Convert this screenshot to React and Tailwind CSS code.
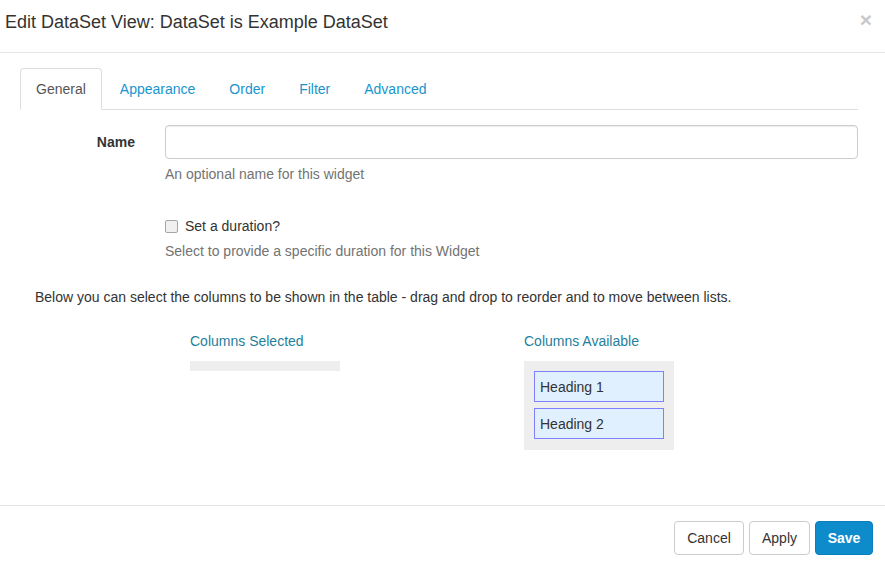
import React from 'react';

const tabs = ['General', 'Appearance', 'Order', 'Filter', 'Advanced'];

const App = () => {
    return (
        <div className="w-[885px] h-[566px] bg-white flex flex-col overflow-hidden text-[14px] text-[#333] font-['Liberation_Sans',Arial,sans-serif]">
            {/* Header */}
            <div className="h-[53px] shrink-0 border-b border-[#e5e5e5] flex items-start justify-between pl-[5px] pr-[13px] pt-[12px]">
                <h4 className="text-[18px] leading-[20px] text-[#333]">Edit DataSet View: DataSet is Example DataSet</h4>
                <button className="text-[21px] leading-[16px] font-bold text-[#c8c8c8]">×</button>
            </div>

            {/* Body */}
            <div className="flex-1 pt-[15px] px-[20px]">
                <ul className="flex w-[838px] border-b border-[#ddd] h-[42px]">
                    {tabs.map((t, i) => (
                        <li key={t} className="mr-[2px]">
                            <a
                                href="#"
                                className={
                                    i === 0
                                        ? 'block h-[42px] px-[15px] leading-[40px] border border-[#ddd] border-b-white bg-white rounded-t-[4px] text-[#555]'
                                        : 'block h-[41px] px-[15px] leading-[40px] border border-transparent text-[#1895cf]'
                                }
                            >
                                {t}
                            </a>
                        </li>
                    ))}
                </ul>

                {/* Name */}
                <div className="flex mt-[15px]">
                    <label className="w-[115px] text-right font-bold pt-[7px] leading-[20px]">Name</label>
                    <div className="ml-[30px] flex-1 pr-[7px]">
                        <input
                            type="text"
                            className="w-full h-[34px] border border-[#ccc] rounded-[4px] px-3 outline-none shadow-[inset_0_1px_1px_rgba(0,0,0,0.075)]"
                        />
                        <p className="mt-[5px] leading-[20px] text-[#737373]">An optional name for this widget</p>
                    </div>
                </div>

                {/* Duration */}
                <div className="ml-[145px] mt-[32px]">
                    <label className="flex items-center h-[20px] leading-[20px]">
                        <span className="w-[13px] h-[13px] border border-[#a6a6a6] rounded-[2px] bg-[#f0f0f0] mr-[7px]" />
                        Set a duration?
                    </label>
                    <p className="mt-[5px] leading-[20px] text-[#737373]">Select to provide a specific duration for this Widget</p>
                </div>

                <p className="mt-[26px] ml-[15px] leading-[20px]">
                    Below you can select the columns to be shown in the table - drag and drop to reorder and to move between lists.
                </p>

                {/* Columns */}
                <div className="flex mt-[24px] ml-[170px]">
                    <div className="w-[150px]">
                        <h5 className="leading-[20px] text-[#1f7f9c]">Columns Selected</h5>
                        <div className="mt-[10px] h-[10px] bg-[#eee]" />
                    </div>
                    <div className="w-[150px] ml-[184px]">
                        <h5 className="leading-[20px] text-[#1f7f9c]">Columns Available</h5>
                        <div className="mt-[10px] bg-[#eee] pt-[10px] pb-[11px] px-[10px] flex flex-col gap-[6px]">
                            {['Heading 1', 'Heading 2'].map((h) => (
                                <div key={h} className="h-[31px] border border-[#8080ff] bg-[#e0f0ff] px-[5px] pt-[1px] leading-[29px] text-[#333]">
                                    {h}
                                </div>
                            ))}
                        </div>
                    </div>
                </div>
            </div>

            {/* Footer */}
            <div className="h-[61px] shrink-0 border-t border-[#e5e5e5] flex justify-end items-start pt-[15px] pr-[12px] gap-[5px]">
                <button className="h-[34px] w-[70px] border border-[#ccc] rounded-[4px] bg-white text-[#333]">Cancel</button>
                <button className="h-[34px] w-[61px] border border-[#ccc] rounded-[4px] bg-white text-[#333]">Apply</button>
                <button className="h-[34px] w-[58px] border border-[#0b7fbd] rounded-[4px] bg-[#0e8bcb] text-white font-bold">Save</button>
            </div>
        </div>
    );
};

export default App;
